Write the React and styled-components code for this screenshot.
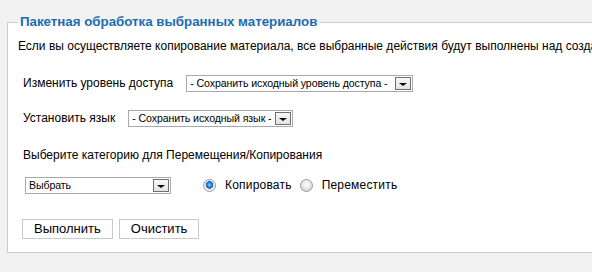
import React from 'react'
import styled, { createGlobalStyle } from 'styled-components'

const GlobalStyle = createGlobalStyle`
    html, body {
        margin: 0;
        padding: 0;
        background: #f2f2f2;
        overflow: hidden;
    }
    body {
        font-family: "Liberation Sans", Arial, sans-serif;
        color: #000;
    }
`

const Page = styled.div`
    padding: 14px 0 0 7px;
    width: 800px;
`

const Fieldset = styled.fieldset`
    margin: 0;
    padding: 0 10px 13px 10px;
    border: 1px solid #cbcbcb;
    background: #fff;
    min-width: 0;
`

const Legend = styled.legend`
    padding: 0 2px;
    font-size: 13.3px;
    font-weight: bold;
    color: #1e6cb0;
    line-height: 16px;
`

const Intro = styled.p`
    margin: 9px 0 0;
    font-size: 12px;
    line-height: 15px;
    white-space: nowrap;
`

const Row = styled.div`
    display: flex;
    align-items: center;
    padding-left: ${p => p.$indent || 5}px;
    margin-top: ${p => p.$top}px;
`

const Label = styled.span`
    font-size: 12px;
    line-height: 15px;
    margin-right: ${p => p.$gap || 0}px;
`

const SelectBox = styled.div`
    display: flex;
    align-items: center;
    width: ${p => p.$width}px;
    height: 17px;
    box-sizing: border-box;
    border: 1px solid #a9a9a9;
    background: #fff;
    padding: 0 1px 0 3px;
`

const SelectText = styled.span`
    flex: 1;
    font-size: 10.6px;
    line-height: 13px;
    letter-spacing: -0.1px;
    white-space: nowrap;
    overflow: hidden;
`

const ArrowButton = styled.span`
    display: flex;
    align-items: center;
    justify-content: center;
    flex: none;
    width: 16px;
    height: 13px;
    box-sizing: border-box;
    border: 1px solid #707070;
    background: linear-gradient(#f7f7f7, #e3e3e3);

    &::after {
        content: '';
        width: 0;
        height: 0;
        margin-top: 2px;
        border-left: 4px solid transparent;
        border-right: 4px solid transparent;
        border-top: 3px solid #000;
    }
`

const RadioGroup = styled.div`
    display: flex;
    align-items: center;
    margin-left: 32px;
`

const Radio = styled.span`
    width: 13px;
    height: 13px;
    box-sizing: border-box;
    border-radius: 50%;
    border: 1px solid #9a9a9a;
    background: ${p => p.$checked
        ? 'radial-gradient(circle at 50% 45%, #8fd0ff 0, #2f8be0 2px, #0f5aa8 3.5px, #e6e6e6 4px, #f4f4f4 6px)'
        : 'radial-gradient(circle at 50% 40%, #ffffff 0, #e9e9e9 4px, #d6d6d6 6px)'};
    margin-right: 9px;
`

const RadioLabel = styled.span`
    font-size: 12px;
    line-height: 15px;
    letter-spacing: 0.2px;
    margin-right: 8px;
`

const Buttons = styled.div`
    display: flex;
    gap: 6px;
    padding-left: 4px;
    margin-top: 25px;
`

const Button = styled.button`
    height: 20px;
    padding: 0 11px;
    border: 1px solid #c9c9c9;
    background: #fff;
    font-family: inherit;
    font-size: 13px;
    line-height: 16px;
    color: #000;
    cursor: pointer;
`

function Select(props) {
    return (
        <SelectBox $width={props.width}>
            <SelectText>{props.value}</SelectText>
            <ArrowButton />
        </SelectBox>
    )
}

function App() {
    return (
        <Page>
            <GlobalStyle />
            <Fieldset>
                <Legend>Пакетная обработка выбранных материалов</Legend>
                <Intro>
                    Если вы осуществляете копирование материала, все выбранные действия будут выполнены над созданной копией материала.
                </Intro>
                <Row $top={21}>
                    <Label $gap={13}>Изменить уровень доступа</Label>
                    <Select width={227} value="- Сохранить исходный уровень доступа -" />
                </Row>
                <Row $top={18}>
                    <Label $gap={13}>Установить язык</Label>
                    <Select width={165} value="- Сохранить исходный язык -" />
                </Row>
                <Row $top={21}>
                    <Label>Выберите категорию для Перемещения/Копирования</Label>
                </Row>
                <Row $top={14} $indent={7}>
                    <Select width={146} value="Выбрать" />
                    <RadioGroup>
                        <Radio $checked />
                        <RadioLabel>Копировать</RadioLabel>
                        <Radio />
                        <RadioLabel>Переместить</RadioLabel>
                    </RadioGroup>
                </Row>
                <Buttons>
                    <Button>Выполнить</Button>
                    <Button>Очистить</Button>
                </Buttons>
            </Fieldset>
        </Page>
    )
}

export default App
